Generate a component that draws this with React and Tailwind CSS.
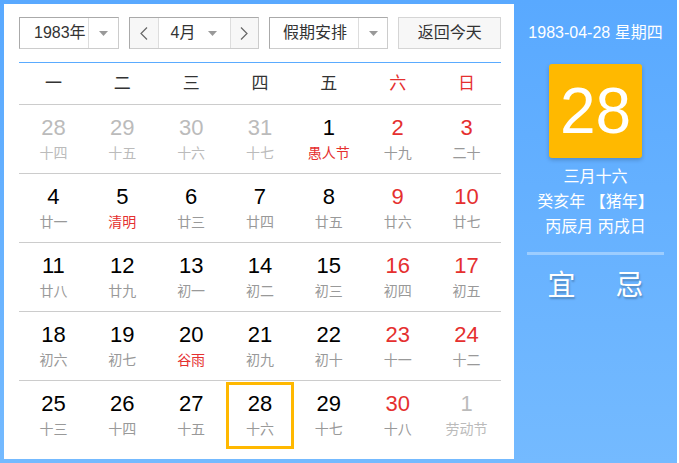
import React from 'react';

const RED = 'text-[#e5302f]';

const weeks = [
  [
    { d: 28, l: '十四', out: true },
    { d: 29, l: '十五', out: true },
    { d: 30, l: '十六', out: true },
    { d: 31, l: '十七', out: true },
    { d: 1, l: '愚人节', fest: true },
    { d: 2, l: '十九' },
    { d: 3, l: '二十' },
  ],
  [
    { d: 4, l: '廿一' },
    { d: 5, l: '清明', fest: true },
    { d: 6, l: '廿三' },
    { d: 7, l: '廿四' },
    { d: 8, l: '廿五' },
    { d: 9, l: '廿六' },
    { d: 10, l: '廿七' },
  ],
  [
    { d: 11, l: '廿八' },
    { d: 12, l: '廿九' },
    { d: 13, l: '初一' },
    { d: 14, l: '初二' },
    { d: 15, l: '初三' },
    { d: 16, l: '初四' },
    { d: 17, l: '初五' },
  ],
  [
    { d: 18, l: '初六' },
    { d: 19, l: '初七' },
    { d: 20, l: '谷雨', fest: true },
    { d: 21, l: '初九' },
    { d: 22, l: '初十' },
    { d: 23, l: '十一' },
    { d: 24, l: '十二' },
  ],
  [
    { d: 25, l: '十三' },
    { d: 26, l: '十四' },
    { d: 27, l: '十五' },
    { d: 28, l: '十六', selected: true },
    { d: 29, l: '十七' },
    { d: 30, l: '十八' },
    { d: 1, l: '劳动节', out: true },
  ],
];

const weekdays = ['一', '二', '三', '四', '五', '六', '日'];

const Caret = () => (
  <svg width="9" height="5" viewBox="0 0 9 5">
    <path d="M0 0h9L4.5 5z" fill="#999" />
  </svg>
);

const Chevron = ({ dir }) => (
  <svg width="8" height="13" viewBox="0 0 8 13">
    <path
      d={dir === 'left' ? 'M7 0.5L1 6.5l6 6' : 'M1 0.5l6 6-6 6'}
      fill="none"
      stroke="#666"
      strokeWidth="1.2"
    />
  </svg>
);

const boxBorder = 'border border-t-[#aaa] border-l-[#aaa] border-r-[#ccc] border-b-[#ccc]';

const DayCell = ({ day, col }) => {
  const weekend = col >= 5;
  let numColor = 'text-black';
  if (day.out) numColor = 'text-[#bbb]';
  else if (weekend) numColor = RED;
  let lunarColor = 'text-[#999]';
  if (day.out) lunarColor = 'text-[#bbb]';
  else if (day.fest) lunarColor = RED;

  return (
    <div className="relative flex flex-col items-center pt-[11px]">
      {day.selected && (
        <span className="absolute inset-x-0 top-[1px] bottom-[1px] border-[3px] border-[#ffb800]" />
      )}
      <span className={`text-[22px] leading-[24px] ${numColor}`}>{day.d}</span>
      <span className={`mt-[3px] text-[14px] leading-[20px] ${lunarColor}`}>{day.l}</span>
    </div>
  );
};

const App = () => {
  return (
    <div
      className="flex h-[463px] w-[677px] bg-gradient-to-b from-[#59a9ff] to-[#74baff]"
      style={{ fontFamily: '"Liberation Sans", "Noto Sans CJK SC", sans-serif' }}
    >
      {/* calendar panel */}
      <div className="my-[4px] ml-[4px] w-[510px] bg-white pl-[15px] pr-[13px] pt-[13px]">
        {/* controls */}
        <div className="flex h-[32px] text-[16px] text-[#333]">
          <div className={`flex w-[100px] ${boxBorder}`}>
            <div className="flex w-[68px] items-center pl-[14px]">1983年</div>
            <div className="flex flex-1 items-center justify-center border-l border-[#ddd]">
              <Caret />
            </div>
          </div>

          <div className={`ml-[10px] flex w-[131px] ${boxBorder}`}>
            <div className="flex w-[28px] items-center justify-center bg-[#f7f7f7]">
              <Chevron dir="left" />
            </div>
            <div className="flex flex-1 items-center justify-between border-x border-[#ddd] pl-[12px] pr-[13px]">
              <span>4月</span>
              <Caret />
            </div>
            <div className="flex w-[27px] items-center justify-center bg-[#f7f7f7]">
              <Chevron dir="right" />
            </div>
          </div>

          <div className={`ml-[10px] flex w-[120px] ${boxBorder}`}>
            <div className="flex w-[88px] items-center pl-[13px]">假期安排</div>
            <div className="flex flex-1 items-center justify-center border-l border-[#ddd]">
              <Caret />
            </div>
          </div>

          <button className="ml-[10px] flex w-[103px] items-center justify-center border border-[#d5d5d5] bg-[#f7f7f7] text-[16px] text-[#333]">
            返回今天
          </button>
        </div>

        {/* weekday header */}
        <div className="mt-[13px] grid h-[43px] grid-cols-7 border-y border-t-[#5aabff] border-b-[#ccc] text-[17px]">
          {weekdays.map((w, i) => (
            <div
              key={w}
              className={`flex items-center justify-center ${i >= 5 ? RED : 'text-[#333]'}`}
            >
              {w}
            </div>
          ))}
        </div>

        {/* weeks */}
        {weeks.map((week, r) => (
          <div
            key={r}
            className={`grid h-[69px] grid-cols-7 ${r < weeks.length - 1 ? 'border-b border-[#ccc]' : ''}`}
          >
            {week.map((day, c) => (
              <DayCell key={c} day={day} col={c} />
            ))}
          </div>
        ))}
      </div>

      {/* side panel */}
      <div className="flex flex-1 flex-col items-center pt-[23px] text-white">
        <div className="text-[16px] leading-[20px]">1983-04-28 星期四</div>
        <div className="mt-[21px] flex h-[94px] w-[93px] items-center justify-center rounded-[3px] bg-[#ffb900] shadow-[0_2px_4px_rgba(0,0,0,0.2)]">
          <span className="text-[64px] leading-none">28</span>
        </div>
        <div className="mt-[6px] flex flex-col items-center text-[16px] leading-[25px]">
          <span>三月十六</span>
          <span>癸亥年 【猪年】</span>
          <span>丙辰月 丙戌日</span>
        </div>
        <div className="mt-[13px] h-[3px] w-[137px] bg-white/35" />
        <div className="mt-[15px] flex gap-[40px] text-[28px] leading-[32px] [text-shadow:1px_2px_2px_rgba(0,0,0,0.25)]">
          <span>宜</span>
          <span>忌</span>
        </div>
      </div>
    </div>
  );
};

export default App;
